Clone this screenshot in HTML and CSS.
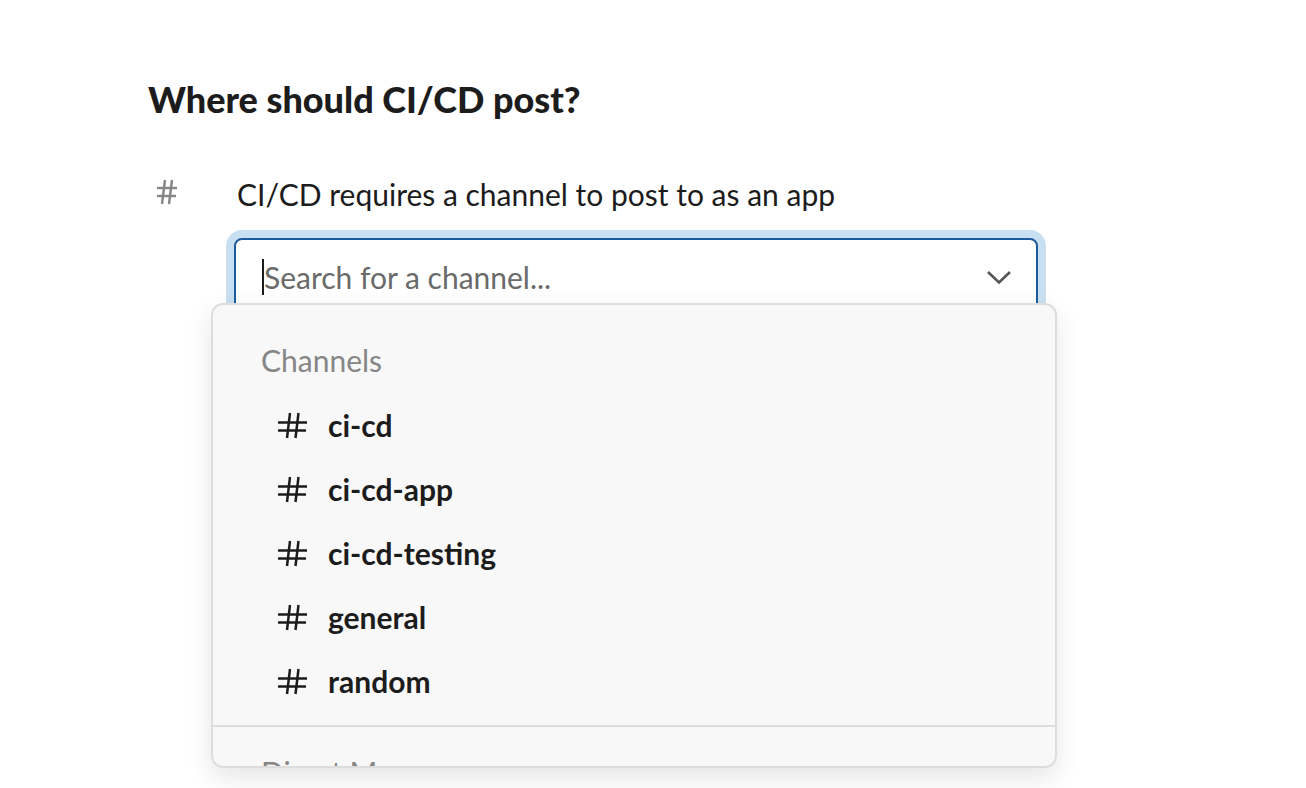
FILE: index.html
```html
<!DOCTYPE html>
<html>
<head>
<meta charset="utf-8">
<link rel="stylesheet" href="styles.css">
</head>
<body>
<div class="page">
  <h1 class="title">Where should CI/CD post?</h1>
  <div class="row">
    <div class="row-icon">
      <svg width="22" height="26" viewBox="0 0 22 26"><g stroke="#868686" stroke-width="2.4" fill="none" stroke-linecap="butt"><line x1="1" y1="9" x2="21" y2="9"/><line x1="1" y1="17" x2="20" y2="17"/><line x1="9" y1="1" x2="6" y2="25"/><line x1="16" y1="1" x2="13" y2="25"/></g></svg>
    </div>
    <div class="row-body">
      <div class="desc">CI/CD requires a channel to post to as an app</div>
      <div class="select">
        <div class="input">
          <span class="caret"></span><span class="placeholder">Search for a channel...</span>
          <svg class="chev" width="26" height="16" viewBox="0 0 26 16"><polyline points="2,3 13,13.5 24,3" fill="none" stroke="#555" stroke-width="2.6"/></svg>
        </div>
        <div class="menu">
          <div class="group">
            <div class="label">Channels</div>
            <div class="item"><svg class="hash" width="31" height="27" viewBox="0 0 31 27"><g stroke="#1d1c1d" stroke-width="2.5" fill="none"><line x1="1" y1="10.5" x2="30" y2="10.5"/><line x1="1" y1="18.5" x2="29" y2="18.5"/><line x1="13" y1="1" x2="10" y2="26"/><line x1="21.5" y1="1" x2="18.5" y2="26"/></g></svg><span>ci-cd</span></div>
            <div class="item"><svg class="hash" width="31" height="27" viewBox="0 0 31 27"><g stroke="#1d1c1d" stroke-width="2.5" fill="none"><line x1="1" y1="10.5" x2="30" y2="10.5"/><line x1="1" y1="18.5" x2="29" y2="18.5"/><line x1="13" y1="1" x2="10" y2="26"/><line x1="21.5" y1="1" x2="18.5" y2="26"/></g></svg><span>ci-cd-app</span></div>
            <div class="item"><svg class="hash" width="31" height="27" viewBox="0 0 31 27"><g stroke="#1d1c1d" stroke-width="2.5" fill="none"><line x1="1" y1="10.5" x2="30" y2="10.5"/><line x1="1" y1="18.5" x2="29" y2="18.5"/><line x1="13" y1="1" x2="10" y2="26"/><line x1="21.5" y1="1" x2="18.5" y2="26"/></g></svg><span>ci-cd-testing</span></div>
            <div class="item"><svg class="hash" width="31" height="27" viewBox="0 0 31 27"><g stroke="#1d1c1d" stroke-width="2.5" fill="none"><line x1="1" y1="10.5" x2="30" y2="10.5"/><line x1="1" y1="18.5" x2="29" y2="18.5"/><line x1="13" y1="1" x2="10" y2="26"/><line x1="21.5" y1="1" x2="18.5" y2="26"/></g></svg><span>general</span></div>
            <div class="item"><svg class="hash" width="31" height="27" viewBox="0 0 31 27"><g stroke="#1d1c1d" stroke-width="2.5" fill="none"><line x1="1" y1="10.5" x2="30" y2="10.5"/><line x1="1" y1="18.5" x2="29" y2="18.5"/><line x1="13" y1="1" x2="10" y2="26"/><line x1="21.5" y1="1" x2="18.5" y2="26"/></g></svg><span>random</span></div>
          </div>
          <div class="group group2">
            <div class="label">Direct Messages</div>
          </div>
        </div>
      </div>
    </div>
  </div>
</div>
</body>
</html>
```
FILE: styles.css
```css
html, body {
  margin: 0;
  padding: 0;
  background: #ffffff;
}
body {
  font-family: Lato, "Noto Sans", sans-serif;
  color: #1d1c1d;
  width: 1306px;
  height: 788px;
  overflow: hidden;
}
.page {
  padding: 77px 0 0 148px;
}
.title {
  margin: 0;
  font-size: 36px;
  line-height: 44px;
  font-weight: 900;
  color: #1d1c1d;
}
.row {
  display: flex;
  margin-top: 53px;
}
.row-icon {
  width: 89px;
  flex: none;
  padding: 5px 0 0 8px;
  box-sizing: border-box;
}
.row-icon svg {
  display: block;
}
.row-body {
  flex: none;
}
.desc {
  font-size: 30px;
  line-height: 40px;
  color: #1d1c1d;
}
.select {
  position: relative;
  margin-top: 24px;
  margin-left: -3px;
  width: 804px;
}
.input {
  box-sizing: border-box;
  height: 80px;
  border: 2px solid #1e5b9c;
  border-radius: 8px;
  box-shadow: 0 0 0 8px #c8e0f2;
  background: #fff;
  display: flex;
  align-items: center;
  padding: 0 24px 2px 26px;
}
.caret {
  width: 2px;
  height: 36px;
  background: #1d1c1d;
  flex: none;
}
.placeholder {
  font-size: 30px;
  color: #6a6a6a;
  flex: 1;
}
.chev {
  display: block;
  flex: none;
}
.menu {
  position: absolute;
  left: -23px;
  top: 65px;
  width: 846px;
  height: 465px;
  box-sizing: border-box;
  background: #f8f8f8;
  border: 2px solid #dddddd;
  border-radius: 12px;
  box-shadow: 0 10px 26px rgba(0, 0, 0, 0.10);
  overflow: hidden;
}
.group {
  padding: 22px 0 12px;
  border-bottom: 2px solid #dddddd;
}
.group2 {
  padding-top: 12px;
  border-bottom: none;
}
.label {
  height: 66px;
  display: flex;
  align-items: center;
  padding-left: 48px;
  font-size: 30px;
  color: #868686;
}
.item {
  height: 64px;
  display: flex;
  align-items: center;
  padding-left: 64px;
  font-size: 30px;
  font-weight: 700;
  color: #1d1c1d;
}
.hash {
  display: block;
  flex: none;
  margin-right: 20px;
}
```
